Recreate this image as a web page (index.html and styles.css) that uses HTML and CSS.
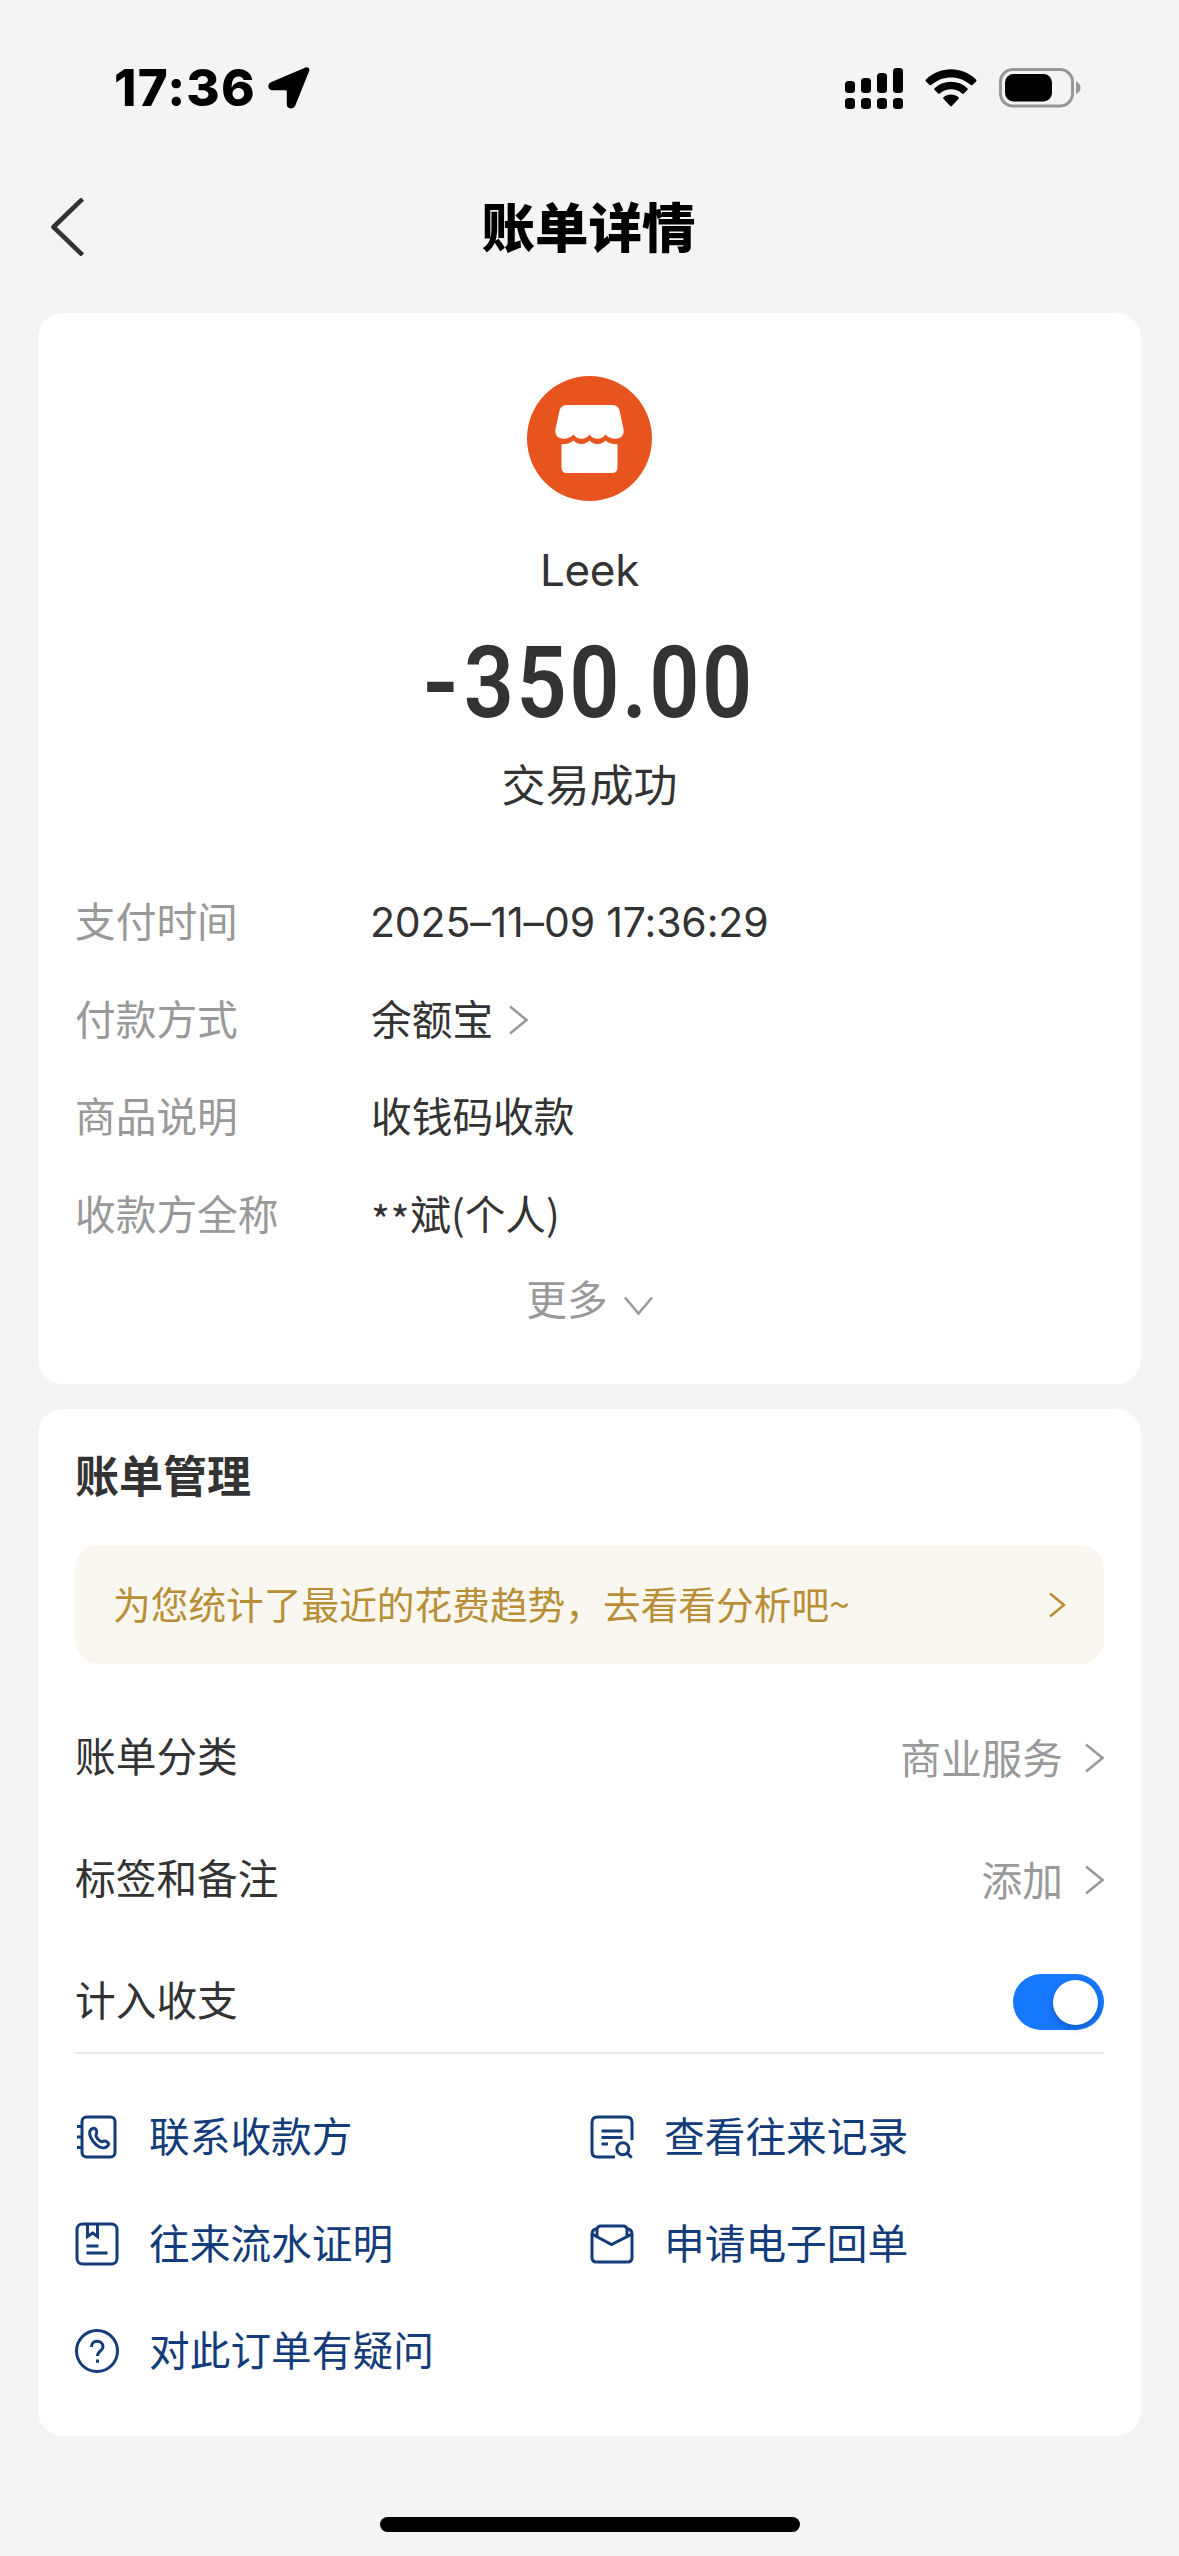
FILE: index.html
```html
<!DOCTYPE html>
<html lang="zh-CN">
<head>
<meta charset="utf-8">
<title>账单详情</title>
<link rel="stylesheet" href="styles.css">
</head>
<body>
<div class="screen">
  <header class="status">
    <div class="status-left">
      <span class="time">17:36</span>
      <svg class="location" width="42" height="42" viewBox="0 0 42 42"><path d="M37.5 .4C40 -.5 42 1.400 41.200 4L27.200 38.800C25.600 42.500 19.200 42.200 18.800 38V24.500Q18.800 23.200 17.500 23.200H4C-.3 22.900 -1 17 2.900 15.200Z"/></svg>
    </div>
    <div class="status-right">
      <svg width="58" height="41" viewBox="0 0 58 41"><rect x="0" y="13" width="10" height="12" rx="3.500"/><rect x="16" y="10" width="10" height="15" rx="3.500"/><rect x="32" y="5" width="10" height="20" rx="3.500"/><rect x="48" y="0" width="10" height="25" rx="3.500"/><rect x="0" y="30" width="10" height="11" rx="3.500"/><rect x="16" y="30" width="10" height="11" rx="3.500"/><rect x="32" y="30" width="10" height="11" rx="3.500"/><rect x="48" y="30" width="10" height="11" rx="3.500"/></svg>
      <svg class="wifi" width="52" height="38" viewBox="0 0 52 38"><path d="M1 10.500Q0 11.500 1 12.500L4.600 15.900Q5.500 16.700 6.500 15.800C17.500 5.900 34.500 5.900 45.500 15.800Q46.500 16.700 47.400 15.900L51 12.500Q52 11.500 51 10.500C37 -3.100 15 -3.100 1 10.500Z"/><path d="M9.600 19.200Q8.800 20.100 9.700 21L13.200 24.500Q14 25.300 15 24.400C21.300 19 30.700 19 37 24.400Q38 25.300 38.800 24.500L42.300 21Q43.200 20.100 42.400 19.200C33 10.700 19 10.700 9.600 19.200Z"/><path d="M18.500 28.300Q17.700 29.200 18.600 30.100L25 36.800Q26 37.800 27 36.800L33.400 30.100Q34.300 29.200 33.500 28.300C29.300 24.600 22.700 24.600 18.500 28.300Z"/></svg>
      <svg class="battery" width="82" height="40" viewBox="0 0 82 40"><rect x="1.500" y="1.500" width="72" height="36.500" rx="12.500" fill="none" stroke="#979797" stroke-width="3"/><rect x="6" y="6" width="47" height="27.500" rx="8.500"/><path d="M77 13.500Q81.500 15.200 81.500 19.700Q81.500 24.200 77 26Z" fill="#979797"/></svg>
    </div>
  </header>

  <nav class="nav">
    <svg class="back" width="34" height="58" viewBox="0 0 34 58"><path d="M32.500 1L3.500 29L32.500 57" fill="none" stroke="#333" stroke-width="4.600" stroke-linejoin="round"/></svg>
    <h1 class="nav-title">账单详情</h1>
  </nav>

  <main class="cards">
    <section class="card summary">
      <svg class="avatar" width="125" height="125" viewBox="0 0 125 125"><circle cx="62.500" cy="62.500" r="62.500" fill="#e8541e"/><path fill="#fff" d="M40 29H85Q91 29 92.500 34.500L96.500 53C97.500 59 94 62.800 88.500 62.800C84 62.800 80.500 61 78.600 58.500C75 64 66.500 64.500 62.500 58.500C58.500 64.500 50 64 46.400 58.500C44.500 61 41 62.800 36.500 62.800C31 62.800 27.500 59 28.500 53L32.500 34.500Q34 29 40 29Z"/><path fill="#fff" d="M34.500 68.300C39.500 68.500 43.500 67.400 46.400 64.600C51 69.300 58 69.300 62.500 64.600C67 69.300 74 69.300 78.600 64.600C81.500 67.400 85.500 68.500 90.500 68.300V91.500Q90.500 97 85 97H40Q34.500 97 34.500 91.500Z"/></svg>
      <div class="merchant">Leek</div>
      <div class="amount"><span class="minus">-</span>350.00</div>
      <div class="state">交易成功</div>
      <dl class="details">
        <div class="detail"><dt>支付时间</dt><dd class="date">2025–11–09 17:36:29</dd></div>
        <div class="detail"><dt>付款方式</dt><dd>余额宝<svg class="chev" width="19" height="30" viewBox="0 0 19 30"><path d="M1 1.500L17.500 15L1 28.500"/></svg></dd></div>
        <div class="detail"><dt>商品说明</dt><dd>收钱码收款</dd></div>
        <div class="detail"><dt>收款方全称</dt><dd><span class="stars">**</span>斌(个人)</dd></div>
      </dl>
      <div class="more">更多<svg width="29" height="20" viewBox="0 0 29 20"><path d="M1 1.500L14.500 17.500L28 1.500"/></svg></div>
    </section>

    <section class="card manage">
      <h2 class="manage-title">账单管理</h2>
      <a class="tip"><span>为您统计了最近的花费趋势，去看看分析吧~</span><svg width="17" height="26" viewBox="0 0 17 26"><path d="M1 1.500L15 13L1 24.500"/></svg></a>
      <div class="option"><span class="option-label">账单分类</span><span class="option-value"><span>商业服务</span><svg width="19" height="30" viewBox="0 0 19 30"><path d="M1 1.500L17.500 15L1 28.500"/></svg></span></div>
      <div class="option"><span class="option-label">标签和备注</span><span class="option-value"><span>添加</span><svg width="19" height="30" viewBox="0 0 19 30"><path d="M1 1.500L17.500 15L1 28.500"/></svg></span></div>
      <div class="option"><span class="option-label">计入收支</span><span class="switch"><span class="knob"></span></span></div>
      <div class="links">
        <a class="link"><svg width="44" height="44" viewBox="0 0 44 44"><rect x="7" y="2" width="33" height="40" rx="4.500"/><path d="M2 11.500H7M2 22H7M2 32.500H7"/><path d="M16 14.500C18.500 12.300 20.500 13 21.500 15.500C22.800 18.500 20.300 19.500 21 21.300C22 23.800 23.500 25.300 25.800 26.500C27.500 27.300 28.700 25 31.200 26.300C34.500 28 34 30 31.800 31.700C29 33.900 24.500 32.700 20.800 29.300C16.500 25.500 12.500 18 16 14.500Z"/></svg><span>联系收款方</span></a>
        <a class="link"><svg width="44" height="44" viewBox="0 0 44 44"><path d="M42 25V7.500Q42 2 36.500 2H7.500Q2 2 2 7.500V36.500Q2 42 7.500 42H25M11.500 16H32.500M11.500 22.500H32.500M11.500 29H18"/><circle cx="32.800" cy="33.700" r="6"/><path d="M37.200 38L41.700 42.700"/></svg><span>查看往来记录</span></a>
        <a class="link"><svg width="44" height="44" viewBox="0 0 44 44"><rect x="2" y="2" width="40" height="40" rx="5.500"/><path d="M12.500 2V14.500L17.700 11L22.500 14.500V2M11.500 24H23.500M11.500 31H32.500"/></svg><span>往来流水证明</span></a>
        <a class="link"><svg width="44" height="44" viewBox="0 0 44 44"><path d="M2 12.500V35.500Q2 40 6.500 40H37.500Q42 40 42 35.500V12.500"/><path d="M7 13.500V8Q7 4 11 4H33Q37 4 37 8V13.500M7 6.500Q2 7.500 2 12L21.500 22.500L42 12Q42 7.500 37 6.500"/></svg><span>申请电子回单</span></a>
        <a class="link"><svg width="44" height="44" viewBox="0 0 44 44"><circle cx="22" cy="22" r="20.500"/><path d="M16.500 18C16.500 14.500 18.800 12.300 22 12.300C25.500 12.300 28 14.500 28 17.700C28 22 22.500 21.800 22.500 27M22.500 30.500V33.800"/></svg><span>对此订单有疑问</span></a>
      </div>
    </section>
  </main>
  <div class="home"></div>
</div>
</body>
</html>
```
FILE: styles.css
```css
* {
  box-sizing: border-box;
  margin: 0;
  padding: 0;
}

body {
  background: #f4f4f4;
  color: #333;
  font-family: "Noto Sans CJK SC", sans-serif;
  font-size: 40.700px;
}

svg {
  display: block;
  flex: none;
}

.screen {
  display: flex;
  flex-direction: column;
  width: 1179px;
  height: 2556px;
}

.status {
  display: flex;
  justify-content: space-between;
  align-items: center;
  height: 176px;
  padding: 0 98px 0 114px;
}

.status-left,
.status-right {
  display: flex;
  align-items: center;
}

.status-left {
  gap: 12px;
}

.time {
  font: 800 51px/60px Inter, sans-serif;
  letter-spacing: 1.200px;
  color: #000;
}

.wifi {
  margin-left: 22px;
}

.battery {
  margin-left: 22px;
}

.nav {
  display: grid;
  grid-template-columns: 100px 1fr 100px;
  align-items: center;
  height: 102px;
  margin-bottom: 35px;
  padding: 0 50px;
}

.nav-title {
  padding: 0 2px 4px 0;
  font-size: 53.500px;
  font-weight: 900;
  line-height: 80px;
  color: #000;
  text-align: center;
}

.cards {
  display: flex;
  flex-direction: column;
  gap: 25px;
  padding: 0 38px;
}

.card {
  padding: 0 37px;
  border-radius: 25px;
  background: #fff;
}

.summary {
  display: flex;
  flex-direction: column;
  align-items: center;
  height: 1071px;
  padding-top: 63px;
}

.merchant {
  margin-top: 39px;
  font: 400 44px/60px Inter, sans-serif;
  letter-spacing: -.3px;
}

.amount {
  margin-top: 33px;
  font: 600 100px/100px Roboto, sans-serif;
  letter-spacing: 2.800px;
  transform: scaleX(.88);
}

.minus {
  display: inline-block;
  margin-right: 5px;
  transform: scaleX(1.120);
}

.state {
  margin-top: 20px;
  font-size: 44px;
  line-height: 60px;
}

.details {
  align-self: stretch;
  margin-top: 60px;
}

.detail {
  display: flex;
  align-items: center;
  height: 97.700px;
  padding-bottom: 4px;
  line-height: 60px;
}

.detail dt {
  width: 296px;
  color: #999;
}

.detail dd {
  display: flex;
  align-items: center;
}

.detail .date {
  margin-left: -1px;
  padding-top: 4px;
  font: 400 41px/60px Inter, sans-serif;
  letter-spacing: -.150px;
}

.stars {
  padding-top: 13px;
  letter-spacing: .6px;
}

.chev {
  margin: 4px 0 0 16px;
}

.chev,
.more svg,
.option svg {
  fill: none;
  stroke: #999;
  stroke-width: 2.500;
}

.more {
  display: flex;
  align-items: center;
  gap: 16px;
  margin-top: 4px;
  color: #999;
  line-height: 60px;
}

.more svg {
  margin-top: 16px;
}

.manage {
  height: 1027px;
  padding-top: 35px;
}

.manage-title {
  font-size: 44px;
  font-weight: 700;
  line-height: 60px;
}

.tip {
  display: flex;
  justify-content: space-between;
  align-items: center;
  height: 119px;
  margin: 41px 0 32px;
  padding: 0 38px;
  border-radius: 24px;
  background: #faf7f0;
  color: #b88e36;
  font-size: 37.700px;
}

.tip span {
  padding-bottom: 4px;
}

.tip svg {
  fill: none;
  stroke: #b88e36;
  stroke-width: 2.500;
}

.option {
  display: flex;
  justify-content: space-between;
  align-items: center;
  height: 122px;
}

.option-label {
  padding-bottom: 6px;
}

.option-value {
  display: flex;
  align-items: center;
  gap: 22px;
  color: #999;
}

.option-value span {
  padding-bottom: 2px;
}

.option-value svg {
  margin-top: 2px;
}

.switch {
  display: flex;
  justify-content: flex-end;
  align-items: center;
  width: 91px;
  height: 56px;
  margin-top: 2px;
  padding-right: 6px;
  border-radius: 28px;
  background: #1677ff;
}

.knob {
  width: 45px;
  height: 45px;
  border-radius: 50%;
  background: #fff;
  box-shadow: 0 3px 6px rgba(0, 0, 0, .25);
}

.links {
  display: grid;
  grid-template-columns: 515px 1fr;
  grid-auto-rows: 107px;
  margin-top: -10px;
  padding-top: 29px;
  border-top: 2px solid #e8e8e8;
}

.link {
  display: flex;
  align-items: center;
  gap: 30px;
  color: #133c7a;
}

.link span {
  padding-bottom: 4px;
}

.link svg {
  fill: none;
  stroke: #133c7a;
  stroke-width: 3;
}

.home {
  width: 420px;
  height: 15px;
  margin: 81px auto 0;
  border-radius: 7.500px;
  background: #000;
}
```
